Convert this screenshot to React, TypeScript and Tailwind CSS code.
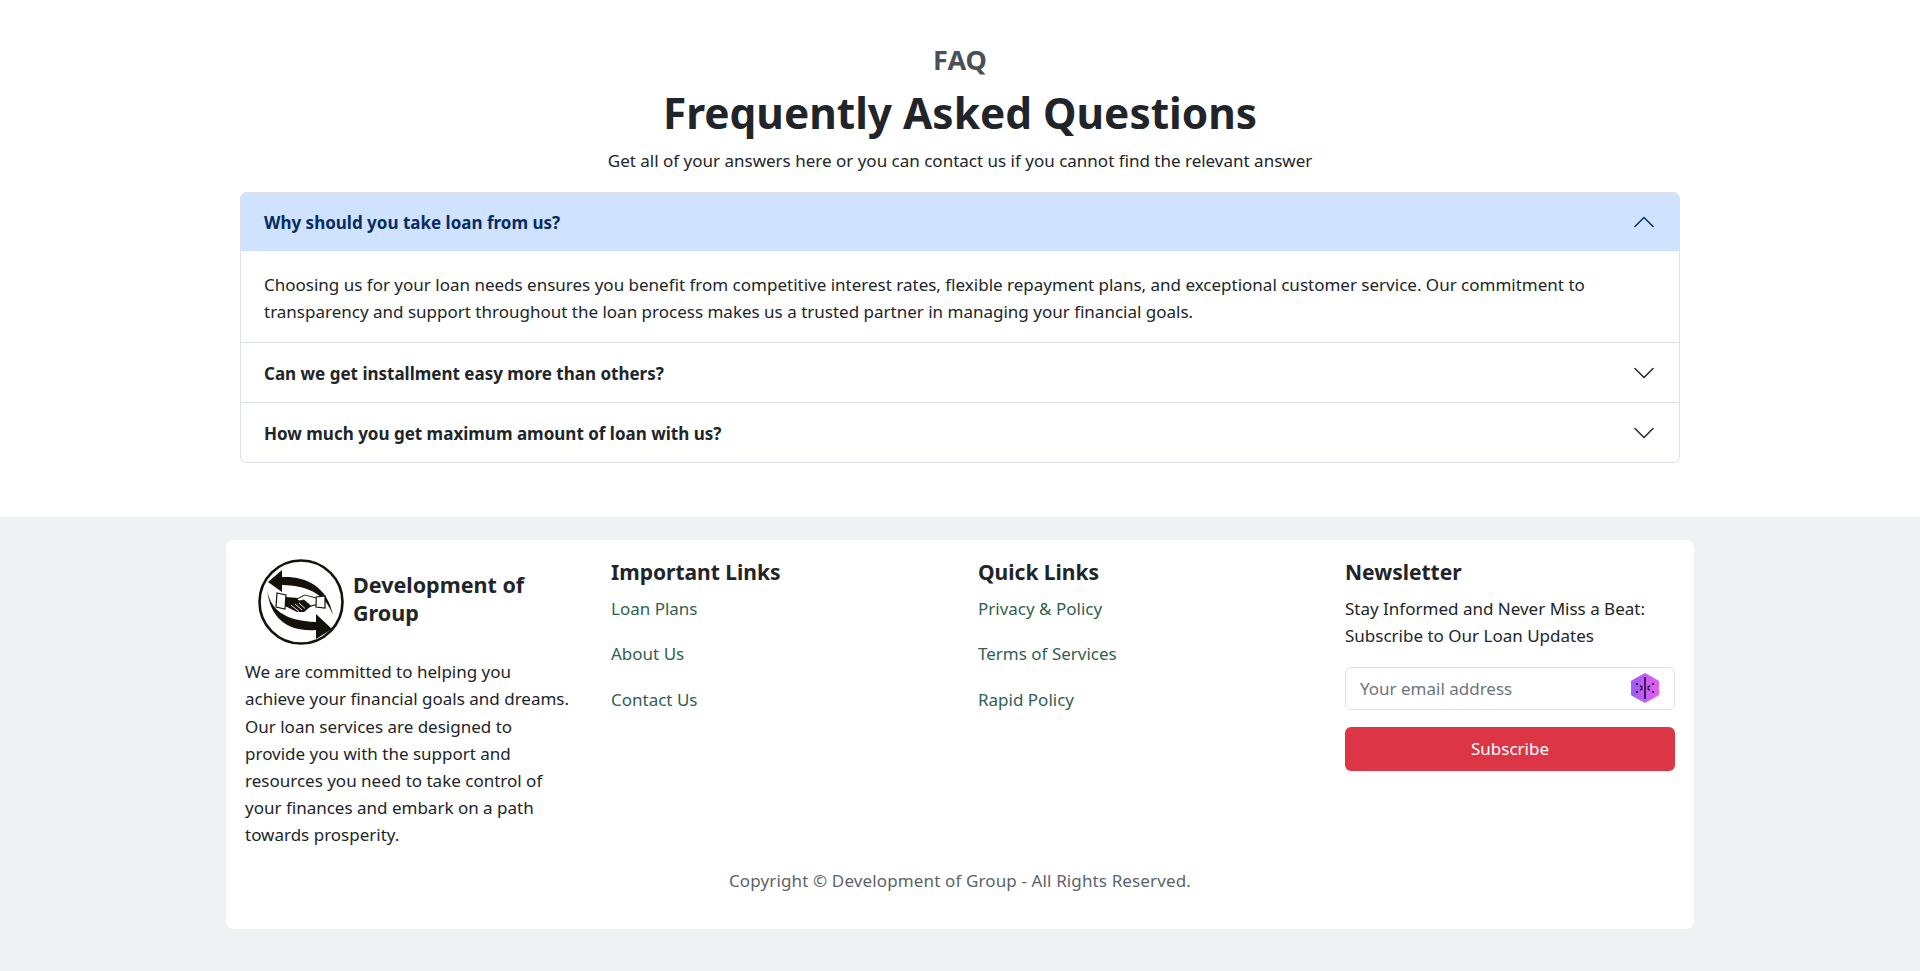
import React from "react";

const font = "font-['Noto_Sans','Open_Sans',sans-serif]";

function Chevron({ up, color }: { up?: boolean; color: string }) {
  return (
    <svg width="24" height="24" viewBox="0 0 16 16" fill={color} className={up ? "rotate-180" : ""}>
      <path fillRule="evenodd" d="M1.646 4.646a.5.5 0 0 1 .708 0L8 10.293l5.646-5.647a.5.5 0 0 1 .708.708l-6 6a.5.5 0 0 1-.708 0l-6-6a.5.5 0 0 1 0-.708z" />
    </svg>
  );
}

function Logo() {
  return (
    <svg width="86" height="86" viewBox="0 0 86 86" className="shrink-0 mt-[1px]">
      <circle cx="43" cy="43" r="41.5" fill="#fff" stroke="#14110a" strokeWidth="2.6" />
      {/* upper arrow, pointing left */}
      <path d="M10 23 L24 11 L24 18 C46 17 69 26 75 56 C68 38 55 27 24 26 L24 33 Z" fill="#14110a" />
      {/* lower arrow, pointing right */}
      <path d="M9 30 C12 50 26 62 58 63 L58 55 L74 70 L58 80 L58 71 C30 73 12 60 9 30 Z" fill="#14110a" />
      <path d="M19 34 L28 36 L27 50 L18 48 Z" fill="#fff" stroke="#14110a" strokeWidth="1.2" />
      <path d="M67 37 L58 38 L58 48 L67 49 Z" fill="#fff" stroke="#14110a" strokeWidth="1.2" />
      <path d="M28 38 L40 39 L46 36 L58 38.5 L58 46 L52 48 L46 53 L39 53 L27 47 Z" fill="#14110a" />
      <path d="M39 40 L47 36 L58 39 L58 45.5 L53 47 L46 41 L41 42 Z" fill="#fff" stroke="#14110a" strokeWidth="0.8" />
      <path d="M33 46 L41 52.5 M37 45 L44 51 M41 44 L47 49.5" stroke="#fff" strokeWidth="0.9" />
    </svg>
  );
}

function Hex() {
  return (
    <svg width="28" height="30" viewBox="0 0 28 30" className="absolute right-[15px] top-[5px]">
      <defs>
        <linearGradient id="hexg" x1="0" y1="0" x2="1" y2="0">
          <stop offset="0" stopColor="#9d5cf6" />
          <stop offset="1" stopColor="#e85cf0" />
        </linearGradient>
      </defs>
      <path d="M14 0.5 L27.5 8 L27.5 22 L14 29.5 L0.5 22 L0.5 8 Z" fill="url(#hexg)" stroke="url(#hexg)" strokeLinejoin="round" />
      <path d="M14 4 V26" stroke="#1b1030" strokeWidth="1.6" />
      <path d="M5 10.5 L7 11.7 M9 12.9 L11.5 14.3 M23 10.5 L21 11.7 M19 12.9 L16.5 14.3 M5 19.5 L7 18.3 M9 17.1 L11.5 15.7 M23 19.5 L21 18.3 M19 17.1 L16.5 15.7" stroke="#1b1030" strokeWidth="1.5" />
    </svg>
  );
}

export default function App() {
  return (
    <div className={`${font} bg-white text-[#212529] text-[17px] leading-[27.2px]`}>
      <section className="pt-[43px] pb-[54px]">
        <h5 className="text-center text-[27px] leading-[34px] font-bold text-[#495057]">FAQ</h5>
        <h1 className="text-center text-[42.4px] leading-[50px] font-bold mt-[11px]">Frequently Asked Questions</h1>
        <p className="text-center mt-[9px] mb-[18px]">Get all of your answers here or you can contact us if you cannot find the relevant answer</p>
        <div className="mx-auto w-[1440px] border border-[#dee2e6] rounded-[6px] overflow-hidden">
          <div className="h-[58px] bg-[#cfe2ff] flex items-center justify-between px-[23px] text-[#052c65] font-bold">
            <span>Why should you take loan from us?</span>
            <Chevron up color="#052c65" />
          </div>
          <div className="px-[23px] pt-[20px] border-b border-[#dee2e6] h-[92px]">
            Choosing us for your loan needs ensures you benefit from competitive interest rates, flexible repayment plans, and exceptional customer service. Our commitment to transparency and support throughout the loan process makes us a trusted partner in managing your financial goals.
          </div>
          <div className="h-[60px] flex items-center justify-between px-[23px] font-bold border-b border-[#dee2e6]">
            <span className="pt-[2px]">Can we get installment easy more than others?</span>
            <Chevron color="#212529" />
          </div>
          <div className="h-[59px] flex items-center justify-between px-[23px] font-bold">
            <span className="pt-[2px]">How much you get maximum amount of loan with us?</span>
            <Chevron color="#212529" />
          </div>
        </div>
      </section>
      <footer className="bg-[#f0f1f3] h-[454px] pt-[23px]">
        <div className="mx-auto w-[1468px] h-[389px] bg-white rounded-[8px] pt-[18px]">
          <div className="grid grid-cols-4">
            <div className="px-[19px]">
              <div className="flex items-center pl-[13px] gap-[9px]">
                <Logo />
                <div className="text-[21.5px] leading-[28px] font-bold -mt-[6px]">Development of Group</div>
              </div>
              <p className="mt-[13px]">We are committed to helping you achieve your financial goals and dreams. Our loan services are designed to provide you with the support and resources you need to take control of your finances and embark on a path towards prosperity.</p>
            </div>
            <div className="pl-[18px] pr-[19px]">
              <h5 className="text-[21px] leading-[28px] font-bold">Important Links</h5>
              <ul className="mt-[9px] flex flex-col gap-[18px] text-[#2f5f50]">
                <li>Loan Plans</li>
                <li>About Us</li>
                <li>Contact Us</li>
              </ul>
            </div>
            <div className="pl-[18px] pr-[19px]">
              <h5 className="text-[21px] leading-[28px] font-bold">Quick Links</h5>
              <ul className="mt-[9px] flex flex-col gap-[18px] text-[#2f5f50]">
                <li>Privacy &amp; Policy</li>
                <li>Terms of Services</li>
                <li>Rapid Policy</li>
              </ul>
            </div>
            <div className="pl-[18px] pr-[19px]">
              <h5 className="text-[21px] leading-[28px] font-bold">Newsletter</h5>
              <p className="mt-[9px]">Stay Informed and Never Miss a Beat: Subscribe to Our Loan Updates</p>
              <div className="relative mt-[17px] h-[43px] border border-[#dee2e6] rounded-[6px] flex items-center px-[14px] text-[#6c757d]">
                Your email address
                <Hex />
              </div>
              <div className="mt-[17px] h-[44px] bg-[#dc3545] rounded-[6px] text-white flex items-center justify-center">Subscribe</div>
            </div>
          </div>
          <p className="text-center text-[#5c636a] mt-[18px] tracking-[0.13px]">Copyright © Development of Group - All Rights Reserved.</p>
        </div>
      </footer>
    </div>
  );
}
